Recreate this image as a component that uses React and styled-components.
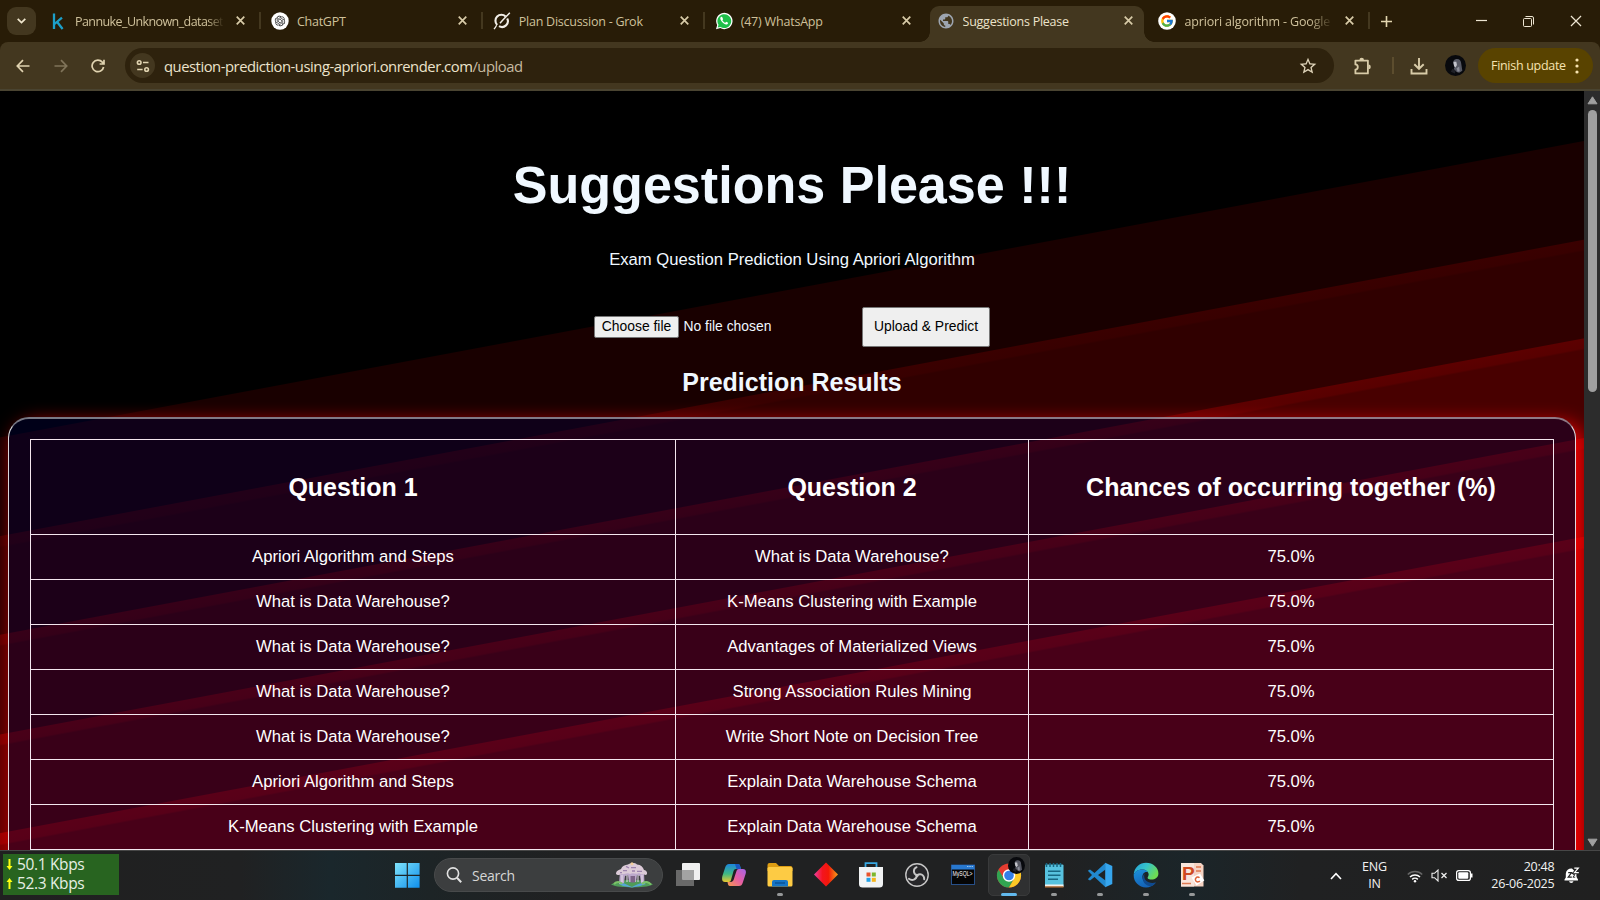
import React from "react";
import styled, { createGlobalStyle, css } from "styled-components";
import { FcGoogle } from "react-icons/fc";
import { RiOpenaiFill } from "react-icons/ri";
import { MdPublic, MdStarBorder } from "react-icons/md";

const UI = `"Open Sans", "Noto Sans", sans-serif`;
const ARIAL = `"Liberation Sans", Arial, sans-serif`;

const Global = createGlobalStyle`
  * { box-sizing: border-box; }
  html, body { margin: 0; padding: 0; background: #000; overflow: hidden; }
  svg { display: block; flex: none; }
`;

const Screen = styled.div`
  width: 1600px;
  height: 900px;
  display: flex;
  flex-direction: column;
  overflow: hidden;
  font-family: ${UI};
`;

/* ---------- tab strip ---------- */
const TabStrip = styled.div`
  height: 42px;
  flex: none;
  display: flex;
  background: #281c07;
  color: #d8cba8;
`;
const TabSearch = styled.div`
  width: 29px;
  height: 28px;
  margin: 7px 2px 0 7px;
  border-radius: 9px;
  background: #43371f;
  display: grid;
  place-items: center;
  flex: none;
`;
const TabBox = styled.div`
  position: relative;
  width: 221.9px;
  height: 42px;
  flex: none;
  display: flex;
  align-items: center;
  padding-left: 11px;
  ${(p) =>
    p.$active &&
    css`
      &::before {
        content: "";
        position: absolute;
        inset: 6px 3px 0 4px;
        border-radius: 9px 9px 0 0;
        background: #43371f;
      }
      &::after {
        content: "";
        position: absolute;
        left: -6px;
        right: -7px;
        bottom: 0;
        height: 10px;
        background:
          radial-gradient(circle at 0 0, transparent 9.5px, #43371f 10px) left / 10px 10px no-repeat,
          radial-gradient(circle at 100% 0, transparent 9.5px, #43371f 10px) right / 10px 10px no-repeat;
      }
    `}
`;
const TabIcon = styled.span`
  position: relative;
  z-index: 1;
  width: 18px;
  height: 18px;
  margin-right: 8px;
  display: grid;
  place-items: center;
`;
const TabTitle = styled.span`
  position: relative;
  z-index: 1;
  width: 149px;
  font-size: 12.5px;
  line-height: 20px;
  padding-top: 1px;
  letter-spacing: ${(p) => p.$ls || 0}px;
  white-space: nowrap;
  overflow: hidden;
  color: ${(p) => (p.$active ? "#ece3cb" : "#cfc19b")};
  ${(p) =>
    p.$fade &&
    css`
      mask-image: linear-gradient(to right, #000 ${p.$fade}px, transparent 149px);
    `}
`;
const TabClose = styled.span`
  position: relative;
  z-index: 1;
  margin-left: 12px;
  width: 10px;
  height: 10px;
`;
const TabDivider = styled.span`
  position: absolute;
  right: -1px;
  top: 12px;
  width: 2px;
  height: 17px;
  background: #44381f;
`;
const NewTab = styled.div`
  width: 34px;
  display: grid;
  place-items: center;
`;
const WindowButtons = styled.div`
  margin-left: auto;
  display: flex;
  align-items: center;
  gap: 36px;
  padding-right: 18px;
  color: #eee6d2;
`;

/* ---------- toolbar ---------- */
const ToolbarBack = styled.div`
  height: 49px;
  flex: none;
  background: #281c07;
`;
const Toolbar = styled.div`
  height: 49px;
  display: flex;
  align-items: center;
  padding: 0 7px 0 0;
  background: #43371f;
  border-bottom: 2px solid #4a4431;
  border-radius: 8px 8px 0 0;
  color: #d8cba8;
`;
const NavGroup = styled.div`
  width: 125px;
  display: flex;
  align-items: center;
  padding-left: 16px;
  gap: 23.5px;
`;
const AddressBar = styled.div`
  width: 1209px;
  height: 35px;
  border-radius: 18px;
  background: #2e220d;
  display: flex;
  align-items: center;
  padding: 0 16px 0 5px;
`;
const SiteInfo = styled.div`
  width: 25px;
  height: 25px;
  border-radius: 50%;
  background: #43371f;
  display: grid;
  place-items: center;
`;
const Url = styled.div`
  margin-left: 9px;
  flex: 1;
  font-size: 14.8px;
  letter-spacing: ${(p) => p.$ls}px;
  color: #ece3cb;
  white-space: nowrap;
  span { color: #c6baa0; }
`;
const ToolbarActions = styled.div`
  flex: 1;
  display: flex;
  align-items: center;
`;
const Slot = styled.div`
  width: ${(p) => p.$w}px;
  display: grid;
  place-items: center;
`;
const Rule = styled.div`
  width: 2px;
  height: 17px;
  background: #5c4d2e;
`;
const UpdatePill = styled.div`
  margin-left: auto;
  width: 115px;
  height: 35px;
  border-radius: 18px;
  background: #594300;
  color: #f7e3b0;
  font-size: 12.5px;
  letter-spacing: ${(p) => p.$ls}px;
  display: flex;
  align-items: center;
  justify-content: space-between;
  padding: 0 14px 0 13px;
  white-space: nowrap;
`;

/* ---------- page ---------- */
const Viewport = styled.div`
  height: 759px;
  flex: none;
  display: flex;
  overflow: hidden;
`;
const Page = styled.main`
  width: 1584px;
  height: 759px;
  overflow: hidden;
  display: flex;
  flex-direction: column;
  align-items: center;
  font-family: ${ARIAL};
  color: #fff;
  background: linear-gradient(
    169.4deg,
    #000 340px, #190000 341px,
    #190000 437px, #3a0000 438px, #380000 447px, #300000 449px,
    #300000 534px, #5c0000 535px, #580000 544px, #480000 546px,
    #480000 632px, #7a0000 633px, #760000 642px, #600000 644px,
    #600000 729px, #960000 730px, #920000 740px, #780000 742px
  );
`;
const Title = styled.h1`
  margin: 64px 0 0;
  font-size: 52.08px;
  line-height: 60px;
  font-weight: 700;
  color: #f0f8ff;
`;
const Subtitle = styled.p`
  margin: 35px 0 0;
  font-size: 16.67px;
  line-height: 20px;
  color: #f0f8ff;
`;
const UploadForm = styled.div`
  margin-top: 37px;
  width: 396px;
  height: 40px;
  display: flex;
  align-items: center;
  font-size: 13.89px;
`;
const Button = styled.button`
  font: inherit;
  color: #000;
  background: #efefef;
  border: 1px solid #767676;
  border-radius: 2px;
  padding: 0 0 2px;
  white-space: nowrap;
  width: ${(p) => p.$w}px;
  height: ${(p) => p.$h}px;
`;
const FileName = styled.span`
  margin-left: 4.5px;
  margin-bottom: 2px;
  flex: 1;
  color: #f0f8ff;
`;
const ResultsHeading = styled.h2`
  margin: 20px 0 0;
  font-size: 25px;
  line-height: 30px;
  font-weight: 700;
  color: #f0f8ff;
`;
const Card = styled.section`
  margin-top: 20px;
  width: 1568px;
  height: 460px;
  flex: none;
  padding: 20px 21px 0;
  border: 1px solid rgba(255, 255, 255, 0.85);
  border-top: 2px solid rgba(255, 255, 255, 0.48);
  border-bottom: 0;
  border-radius: 21px 21px 0 0;
  background: rgba(0, 0, 60, 0.4);
  box-shadow: 7px 7px 20px #f00;
`;
const Table = styled.table`
  width: 1524px;
  table-layout: fixed;
  border-collapse: collapse;
  th, td {
    border: 1px solid #f3e6ee;
    padding: 0;
    text-align: center;
    font-size: 16.67px;
    height: 45px;
  }
  th { height: 95px; font-size: 25px; font-weight: 700; }
`;
const ScrollTrack = styled.div`
  width: 16px;
  height: 759px;
  background: #2c2c2c;
  display: flex;
  flex-direction: column;
  align-items: center;
  padding: 5px 0 3px;
`;
const ScrollThumb = styled.div`
  width: 9px;
  height: 282px;
  margin: 5px 0 auto;
  border-radius: 5px;
  background: #9f9f9f;
`;

/* ---------- taskbar ---------- */
const Taskbar = styled.footer`
  height: 50px;
  flex: none;
  display: flex;
  align-items: stretch;
  border-top: 1px solid #474747;
  color: #fff;
  background: linear-gradient(90deg, #202020 0, #202122 240px, #1a272c 330px, #1d2426 430px, #202122 560px, #202122 1060px, #1b2529 1190px, #202122 1300px, #202020 1600px);
`;
const SpeedMeter = styled.div`
  margin: 3px 0 0 3px;
  width: 116px;
  height: 41px;
  background: #286420;
  display: flex;
  flex-direction: column;
  justify-content: center;
  padding: 0 0 2px 3px;
`;
const SpeedRow = styled.div`
  display: flex;
  align-items: center;
  gap: 4px;
  height: 19px;
  font-size: 15.5px;
  letter-spacing: ${(p) => p.$ls}px;
  color: #e6efe4;
  white-space: nowrap;
`;
const Dock = styled.div`
  margin-left: 268px;
  display: flex;
  align-items: center;
`;
const StartLogo = styled.div`
  width: 46px;
  padding-left: 8px;
`;
const SearchPill = styled.div`
  margin: 0 2.5px 1px 1px;
  width: 229px;
  height: 34px;
  border-radius: 17px;
  border: 1px solid #484a4b;
  background: #3c3e3f;
  display: flex;
  align-items: center;
  padding: 0 8px 0 11px;
  font-size: 14px;
  letter-spacing: ${(p) => p.$ls}px;
  color: #d6d6d6;
  span { flex: 1; margin-left: 10px; }
`;
const DockItem = styled.div`
  width: 45.75px;
  height: 49px;
  position: relative;
  display: grid;
  place-items: center;
  padding-bottom: 1px;
  ${(p) =>
    p.$active &&
    css`
      &::before {
        content: "";
        position: absolute;
        inset: 3px 2px 4px 2px;
        border-radius: 5px;
        background: #2f3031;
        border: 1px solid #393a3b;
      }
    `}
  svg { position: relative; }
  &::after {
    content: "";
    position: absolute;
    bottom: 4.5px;
    left: 50%;
    transform: translateX(-50%);
    height: 3px;
    border-radius: 2px;
    width: ${(p) => (p.$active ? 16 : p.$open ? 6 : 0)}px;
    background: ${(p) => (p.$active ? "#62b9ee" : "#969899")};
  }
`;
const Tray = styled.div`
  margin-left: auto;
  display: flex;
  align-items: center;
  padding-right: 11.5px;
  font-size: 12.5px;
`;
const TrayText = styled.div`
  line-height: 16.5px;
  width: ${(p) => p.$w}px;
  text-align: ${(p) => p.$align || "center"};
  letter-spacing: ${(p) => p.$ls || 0}px;
  white-space: nowrap;
  color: #f2f2f2;
`;

/* ---------- icons ---------- */
const Cross = ({ size = 9, w = 1.9 }) => (
  <svg width={size} height={size} viewBox="0 0 10 10" stroke="currentColor" strokeWidth={w}>
    <path d="M0.8 0.8L9.2 9.2M9.2 0.8L0.8 9.2" />
  </svg>
);
const Kaggle = () => (
  <svg width="12" height="17" viewBox="0 0 12 17" fill="none" stroke="#1c9fc9" strokeWidth="2.3">
    <path d="M2 0.5V16M2.5 11L10 4.6M5 8.8L10.6 16" />
  </svg>
);
const ChatGpt = () => (
  <svg width="18" height="18" viewBox="0 0 18 18">
    <circle cx="9" cy="9" r="8.7" fill="#fff" />
    <g transform="translate(2.7 2.7)" color="#222"><RiOpenaiFill size={12.6} /></g>
  </svg>
);
const Grok = () => (
  <svg width="18" height="18" viewBox="0 0 18 18" fill="none" stroke="#f2efe8">
    <path d="M4.2 12.9A5.9 5.9 0 0 1 12.6 4.4" strokeWidth="2.1" />
    <path d="M14.2 6.4A5.9 5.9 0 0 1 6 14.2" strokeWidth="2.1" />
    <path d="M16.8 0.8C14.6 3.2 9 8.8 7 11.2" strokeWidth="1.5" />
    <path d="M1 17.2C2 16 2.9 14.6 3.6 13.2" strokeWidth="1.3" />
  </svg>
);
const WhatsApp = () => (
  <svg width="18" height="18" viewBox="0 0 18 18">
    <path d="M1 17.2L2.2 13A8.2 8.2 0 1 1 5.3 16.1Z" fill="#fff" />
    <path d="M2.7 15.6L3.5 12.8A6.9 6.9 0 1 1 5.6 14.9Z" fill="#1fbf4a" />
    <path d="M6.2 4.8c-1.4.7-1.1 2.6.3 4.4 1.5 2.1 3.6 3.5 5.2 3.2 1-.2 1.5-1 1.4-1.7l-1.8-.9-1 1c-1.3-.5-2.3-1.4-2.9-2.6l.7-1-.9-2.3z" fill="#fff" />
  </svg>
);
const GoogleTab = () => (
  <svg width="18" height="18" viewBox="0 0 18 18">
    <circle cx="9" cy="9" r="8.8" fill="#fff" />
    <g transform="translate(2 2)"><FcGoogle size={14} /></g>
  </svg>
);
const Arrow = ({ flip, dim }) => (
  <svg width="14" height="14" viewBox="0 0 14 14" fill="none" stroke={dim ? "#80745a" : "#e0d3b0"} strokeWidth="1.7" transform={flip ? "scale(-1 1)" : undefined}>
    <path d="M13.5 7H1.5M7 1.2L1.3 7L7 12.8" />
  </svg>
);
const Reload = () => (
  <svg width="14" height="14" viewBox="0 0 14 14" fill="none" stroke="#e0d3b0" strokeWidth="1.7">
    <path d="M12.6 8A5.8 5.8 0 1 1 11.3 3.1L12.8 4.6M13 0.8V5H8.6" />
  </svg>
);
const Tune = () => (
  <svg width="14" height="14" viewBox="0 0 14 14" fill="none" stroke="#e0d3b0" strokeWidth="1.6">
    <circle cx="3.2" cy="3.5" r="1.8" /><path d="M7 3.5H12.5M1.2 10.5H6.6" /><circle cx="10.6" cy="10.5" r="1.8" />
  </svg>
);
const Extension = () => (
  <svg width="18" height="18" viewBox="0 0 18 18" fill="none" stroke="currentColor" strokeWidth="1.8" strokeLinejoin="round">
    <path d="M1.4 3.6H13.9V16.4H1.4V12.6C4.6 12.4 4.6 7.6 1.4 7.4Z" />
    <path d="M5.4 3.2A2.3 2.4 0 0 1 10 3.2ZM14.4 7.6A2.4 2.3 0 0 1 14.4 12.2Z" fill="currentColor" stroke="none" />
  </svg>
);
const Download = () => (
  <svg width="18" height="18" viewBox="0 0 18 18" fill="none" stroke="currentColor" strokeWidth="1.9">
    <path d="M9 1V11.5M4.3 7.2L9 11.8L13.7 7.2M1.5 12V16.5H16.5V12" />
  </svg>
);
const Avatar = ({ size = 21 }) => (
  <svg width={size} height={size} viewBox="0 0 20 20">
    <circle cx="10" cy="10" r="10" fill="#08090d" />
    <path d="M10 4C13 3 15.5 5 15.5 8.5L16.5 15L13.5 17C11 16 9 15 8.4 13L9.5 10.5L8 8.5C7.6 6 8.4 4.5 10 4Z" fill="#565863" />
    <path d="M8 6.5L10.8 6.4L11.4 9.6L10 12L8.6 10.6Z" fill="#c3c4cb" />
    <path d="M11 12.5L13.5 11L14 15.5L12 16Z" fill="#8b8d98" />
    <path d="M7 13L10 14.5L9.5 17.5L5.5 16Z" fill="#1f2027" />
  </svg>
);
const Triangle = ({ down }) => (
  <svg width="11" height="9" viewBox="0 0 11 9">
    <path d={down ? "M1 1.2H10L5.5 8.2Z" : "M1 7.8H10L5.5 0.8Z"} fill="#a0a0a0" stroke="#a0a0a0" strokeLinejoin="round" />
  </svg>
);
const SpeedArrow = ({ up }) => (
  <svg width="7" height="11" viewBox="0 0 7 11" fill="#ffff10" transform={up ? "rotate(180)" : undefined}>
    <path d="M2.5 0H4.5V7H6.5L3.5 11L0.5 7H2.5Z" />
  </svg>
);
const Windows = () => (
  <svg width="25" height="25" viewBox="0 0 25 25">
    <defs><linearGradient id="win" x1="0" y1="0" x2="1" y2="1"><stop offset="0" stopColor="#7fe3fb" /><stop offset="1" stopColor="#0f8fec" /></linearGradient></defs>
    <path d="M0 0H11.7V11.8H0ZM12.9 0H24.6V11.8H12.9ZM0 13H11.7V24.8H0ZM12.9 13H24.6V24.8H12.9Z" fill="url(#win)" />
  </svg>
);
const SearchGlass = () => (
  <svg width="16" height="16" viewBox="0 0 16 16" fill="none" stroke="#e2e2e2" strokeWidth="1.6">
    <circle cx="7" cy="6.5" r="5.6" /><path d="M11 10.8L15.2 15.2" strokeWidth="2" />
  </svg>
);
const Gazebo = () => (
  <svg width="44" height="26" viewBox="0 0 44 26">
    <path d="M1 22.5C8 19 12 18 22 18C32 18 38 20 43 22.5C38 25 31 25 22 25.5C13 25 6 25 1 22.5Z" fill="#4f9c58" />
    <path d="M9 22C13 19 18 24 22 25C26 23 32 19 36 22L30 24L22 25.6L13 24Z" fill="#55a6d6" />
    <path d="M10 10H34L34.5 22L31 21L30 14L27 13L26 20H19L18 13L15 14L14 21L9 22Z" fill="#bda9cc" />
    <path d="M6 12C6 9 8.5 8 11 7C12 4 15 3 18 2.6C20 0.6 25 0.4 27 2.4C31 2.8 33 5 34 8C37 8.6 38.2 11.6 36 13C33 12 31 13 29 11C26 13 23 10 20 12C17 10 14 13 12 12C9.5 12.6 7.6 14 6 12Z" fill="#dccbd8" />
    <path d="M13 8.6H17M21 5.6H26M27 9.4H32M16 4.4L19 6M22 9H25M10 10.6H12" stroke="#9d83ae" strokeWidth="1.3" />
    <path d="M20.5 14H25V20.5H20.5Z" fill="#7d6488" />
    <path d="M12 13V20M32 13V20M17 13V20M28 13V20" stroke="#e9dfec" strokeWidth="1" />
    <path d="M4 22C7 19 11 20 12 22M32 22C35 18.6 39 20 41 22.6" stroke="#7bc267" strokeWidth="2" fill="none" />
    <circle cx="22" cy="1.8" r="1.5" fill="#f2cf9c" />
  </svg>
);
const TaskView = () => (
  <svg width="26" height="26" viewBox="0 0 26 26">
    <rect x="7" y="1" width="18" height="17" rx="1" fill="#f0f0f0" />
    <path d="M1 8H19V24H1Z" fill="#858585" fillOpacity=".72" />
  </svg>
);
const Copilot = () => (
  <svg width="26" height="26" viewBox="0 0 26 26">
    <defs>
      <linearGradient id="cpA" x1="0" y1="0" x2="0" y2="1"><stop offset="0" stopColor="#1c86dc" /><stop offset=".55" stopColor="#3fb883" /><stop offset="1" stopColor="#e9c72f" /></linearGradient>
      <linearGradient id="cpB" x1="1" y1="0" x2="0" y2="1"><stop offset="0" stopColor="#a464e8" /><stop offset=".5" stopColor="#e65da5" /><stop offset="1" stopColor="#f59a4c" /></linearGradient>
    </defs>
    <path d="M8 2H17C19 2 19 4 20 7H15C13 7 12.5 9 12 11L10 18C9.5 20 8.5 20 6 20H4C1 20 0.7 17 1.4 14L4 6C5 3 6 2 8 2Z" fill="url(#cpA)" />
    <path d="M18 24H9C7 24 7 22 6.5 20H9C12 20 12.8 18 13.5 15L15.5 9C16.2 7 17.5 7 19 7H22C25 7 25.4 10 24.6 12L22 20C21 23 20 24 18 24Z" fill="url(#cpB)" />
    <path d="M14 2H17C19 2 19 4 20 7H15.5Z" fill="#1957c2" />
  </svg>
);
const Folder = () => (
  <svg width="26" height="26" viewBox="0 0 26 26">
    <path d="M0.5 3Q0.5 1 2.5 1H9L12 4H23.5Q25.5 4 25.5 6V9H0.5Z" fill="#dd9d13" />
    <rect x=".5" y="5" width="25" height="19.5" rx="1.5" fill="#fdcb44" />
    <path d="M5 24.5V20Q5 18 7 18H19Q21 18 21 20V24.5Z" fill="#1675c6" />
    <path d="M8 21H18" stroke="#0c5598" strokeWidth="1.6" />
  </svg>
);
const Diamond = () => (
  <svg width="26" height="26" viewBox="0 0 26 26">
    <defs><linearGradient id="dia"><stop offset="0" stopColor="#ef3fa0" /><stop offset=".35" stopColor="#f31420" /><stop offset=".6" stopColor="#f31808" /><stop offset="1" stopColor="#f6a01c" /></linearGradient></defs>
    <path d="M13 0.5L25 12.5L13 24.5L1 12.5Z" fill="url(#dia)" />
  </svg>
);
const Store = () => (
  <svg width="26" height="26" viewBox="0 0 26 26">
    <path d="M7.5 6V1.2H18.5V6" fill="none" stroke="#38a8e2" strokeWidth="1.8" />
    <path d="M1 5H25V22Q25 25.5 21.5 25.5H4.5Q1 25.5 1 22Z" fill="#f1f3f4" />
    <path d="M8.5 10.5H12.5V14.5H8.5Z" fill="#e9532b" /><path d="M13.8 10.5H17.8V14.5H13.8Z" fill="#7db72c" />
    <path d="M8.5 15.8H12.5V19.8H8.5Z" fill="#21a0e6" /><path d="M13.8 15.8H17.8V19.8H13.8Z" fill="#f6b51b" />
  </svg>
);
const Obs = () => (
  <svg width="26" height="26" viewBox="0 0 26 26" fill="none" stroke="#c6c6c6">
    <circle cx="13" cy="13" r="11.2" fill="#27272a" strokeWidth="1.4" />
    <g strokeWidth="1.9" strokeLinecap="round">
      <path d="M13 13.4C8.8 11.6 9 7 12.6 5.2" />
      <path d="M13 13.4C16.6 10.6 20.4 13.2 20.2 17.2" />
      <path d="M13 13.4C12.4 17.9 8 19.2 4.9 16.8" />
    </g>
    <circle cx="13" cy="13.4" r="1.6" fill="#c6c6c6" stroke="none" />
  </svg>
);
const MySqlText = styled.text`
  font: 400 7px "Liberation Sans", sans-serif;
`;
const MySql = () => (
  <svg width="26" height="26" viewBox="0 0 26 26">
    <rect x="1.5" y="3" width="23" height="19.5" fill="#050505" stroke="#274f88" />
    <rect x="1.5" y="3" width="23" height="4.5" fill="#2878cf" />
    <path d="M17 4.5H23" stroke="#9cc4ea" strokeDasharray="1.5 .8" />
    <MySqlText x="2.5" y="14" textLength="20" lengthAdjust="spacingAndGlyphs" fill="#fff">MySQL&gt;</MySqlText>
  </svg>
);
const Chrome = () => (
  <svg width="26" height="26" viewBox="0 0 26 26">
    <circle cx="13" cy="13.5" r="12" fill="#e53c30" />
    <path d="M2.6 7.5A12 12 0 0 0 13 25.5L18.2 16.5H7.8Z" fill="#31a451" />
    <path d="M13 25.5A12 12 0 0 0 23.4 7.5H13L18.2 16.5Z" fill="#fbc926" />
    <circle cx="13" cy="13.5" r="6.2" fill="#fff" /><circle cx="13" cy="13.5" r="4.8" fill="#347fe8" />
  </svg>
);
const ChromeBadge = styled.span`
  position: absolute;
  left: 22px;
  top: 6px;
  z-index: 1;
`;
const ChromeIcon = () => (<><Chrome /><ChromeBadge><Avatar size={17} /></ChromeBadge></>);
const Notepad = () => (
  <svg width="26" height="26" viewBox="0 0 26 26">
    <rect x="4" y="2.5" width="18.5" height="22" rx="1" fill="#57c2df" />
    <path d="M4 22.5H22.5V25H4Z" fill="#f2f2ef" /><path d="M4 24.2H22.5V25.6H4Z" fill="#ad6a35" />
    <path d="M5.5 1V5M9 1V5M12.5 1V5M16 1V5M19.5 1V5" stroke="#176783" strokeWidth="1.5" />
    <path d="M7 9.3H19.5M7 13.3H19.5M7 17.3H17" stroke="#176783" strokeWidth="1.5" />
  </svg>
);
const VsCode = () => (
  <svg width="26" height="26" viewBox="0 0 26 26">
    <path d="M18.5 0.8L7.5 11L3 7.6L0.8 8.8L5 13L0.8 17.2L3 18.4L7.5 15L18.5 25.2V18.6L11 13L18.5 7.4Z" fill="#2189cf" />
    <path d="M18.2 0.8L25.3 4V22L18.2 25.3Z" fill="#36a6ee" />
  </svg>
);
const Edge = () => (
  <svg width="26" height="26" viewBox="0 0 26 26">
    <defs>
      <linearGradient id="edA" x1="0" y1="0" x2="1" y2="0.5"><stop offset="0" stopColor="#239ddd" /><stop offset=".5" stopColor="#36c4c9" /><stop offset="1" stopColor="#6ddb53" /></linearGradient>
      <linearGradient id="edB" x1="0" y1="0" x2="0.3" y2="1"><stop offset="0" stopColor="#1c92dc" /><stop offset="1" stopColor="#1464b8" /></linearGradient>
    </defs>
    <path d="M0.7 13C1 5 7 0.7 13 0.7C20 0.7 25.5 5.5 25.4 11.5C25.3 15.5 22 17.5 18.5 17.5C15 17.5 14 16.2 15 14.8C17 12 14.5 8 10 7.6C5.5 7.3 2 9.5 0.7 13Z" fill="url(#edA)" />
    <path d="M0.7 13C2 9 6 7.2 10 7.6C12.5 7.8 14 9 14.8 10.2C11 9.5 9 12.5 9.5 16C10 20.5 15 23.5 22.5 21C20 24 16.5 25.4 13 25.4C6 25.4 0.5 20 0.7 13Z" fill="url(#edB)" />
    <path d="M11.5 11.5C8 14.5 9.5 24 18 24.3C20 23.5 21.8 22.2 23 20.3C17 22.5 9.5 19 11.5 11.5Z" fill="#0f4a8f" />
  </svg>
);
const PptText = styled.text`
  font: 700 19px "Liberation Sans", sans-serif;
`;
const PowerPoint = () => (
  <svg width="26" height="26" viewBox="0 0 26 26">
    <path d="M2 1H22L24.5 3.5V24.5H2Z" fill="#f5d3c3" />
    <path d="M2 1H15V24.5H2Z" fill="#f8e5db" />
    <path d="M17 5H22M17 9H22M3 21.5H12" stroke="#dd7a52" strokeWidth="1.5" />
    <PptText x="3" y="18" fill="#cf4a20">P</PptText>
    <path d="M12.5 15.5L21 11.5L25.3 18.5L17.5 23.5Z" fill="#fff" />
    <path d="M20.5 15.8A2.4 2.4 0 1 0 20.8 18.8" fill="none" stroke="#dd6338" strokeWidth="1.5" />
  </svg>
);
const Caret = () => (
  <svg width="12" height="8" viewBox="0 0 12 8" fill="none" stroke="#fff" strokeWidth="1.6"><path d="M1 7L6 1.7L11 7" /></svg>
);
const Wifi = () => (
  <svg width="16" height="14" viewBox="0 0 16 14" fill="none" stroke="#fff" strokeWidth="1.5">
    <path d="M0.8 5.5A10 10 0 0 1 15.2 5.5" stroke="#666" />
    <path d="M3 8A7 7 0 0 1 13 8M5.2 10.4A4 4 0 0 1 10.8 10.4" />
    <circle cx="8" cy="12.2" r="1.2" fill="#fff" stroke="none" />
  </svg>
);
const Mute = () => (
  <svg width="17" height="13" viewBox="0 0 17 13" fill="none" stroke="#eee" strokeWidth="1.1">
    <path d="M1 4.3H3.5L7 1V12L3.5 8.7H1Z" /><path d="M10.5 4L15.5 9M15.5 4L10.5 9" strokeWidth="1.3" />
  </svg>
);
const Battery = () => (
  <svg width="17" height="11" viewBox="0 0 17 11">
    <rect x=".6" y=".6" width="13.8" height="9.8" rx="2.2" fill="none" stroke="#fff" strokeWidth="1.2" />
    <rect x="2.3" y="2.3" width="10" height="6.4" rx="1" fill="#fff" /><path d="M15.7 3.5V7.5" stroke="#fff" strokeWidth="1.6" />
  </svg>
);
const Bell = () => (
  <svg width="16" height="17" viewBox="0 0 16 17">
    <path d="M0.5 13.4V12.4L1.8 10.4V6.8A5.4 5.4 0 0 1 8 1.6L12.4 6V9L12.8 10.4L14 12.4V13.4Z" fill="#fff" />
    <path d="M5 14.2H9.5A2.3 2.3 0 0 1 5 14.2Z" fill="#fff" />
    <path d="M4.2 5.6H7.6L4.2 10.2H7.8" stroke="#222" fill="none" strokeWidth="1.2" />
    <path d="M9.6 1H14.4L10.2 5.6H15" stroke="#222" fill="none" strokeWidth="2.6" />
    <path d="M10.3 1.2H14.3L10.5 5.6H14.8" stroke="#fff" fill="none" strokeWidth="1.2" />
    <path d="M8.8 7.6H11L8.9 10.2H11.2" stroke="#222" fill="none" strokeWidth=".9" />
  </svg>
);

/* ---------- data ---------- */
const tabs = [
  { title: "Pannuke_Unknown_dataset", icon: <Kaggle />, fade: 132, ls: -0.58 },
  { title: "ChatGPT", icon: <ChatGpt />, ls: -0.25 },
  { title: "Plan Discussion - Grok", icon: <Grok />, ls: -0.25 },
  { title: "(47) WhatsApp", icon: <WhatsApp />, ls: -0.2, noDivider: true },
  { title: "Suggestions Please", icon: <MdPublic size={18} color="#9da5b0" />, active: true, ls: -0.25 },
  { title: "apriori algorithm - Google", icon: <GoogleTab />, fade: 125, ls: -0.16 },
];
const WD = "What is Data Warehouse?";
const rows = [
  ["Apriori Algorithm and Steps", WD],
  [WD, "K-Means Clustering with Example"],
  [WD, "Advantages of Materialized Views"],
  [WD, "Strong Association Rules Mining"],
  [WD, "Write Short Note on Decision Tree"],
  ["Apriori Algorithm and Steps", "Explain Data Warehouse Schema"],
  ["K-Means Clustering with Example", "Explain Data Warehouse Schema"],
];
const apps = [
  { icon: <TaskView /> }, { icon: <Copilot /> }, { icon: <Folder />, open: true }, { icon: <Diamond /> },
  { icon: <Store /> }, { icon: <Obs /> }, { icon: <MySql /> }, { icon: <ChromeIcon />, active: true },
  { icon: <Notepad />, open: true }, { icon: <VsCode />, open: true }, { icon: <Edge />, open: true },
  { icon: <PowerPoint />, open: true },
];

export default function App() {
  return (
    <Screen>
      <Global />
      <TabStrip>
        <TabSearch>
          <svg width="9" height="6" viewBox="0 0 9 6" fill="none" stroke="#efe6cd" strokeWidth="1.7"><path d="M0.7 0.8L4.5 4.6L8.3 0.8" /></svg>
        </TabSearch>
        {tabs.map((t) => (
          <TabBox key={t.title} $active={t.active}>
            <TabIcon>{t.icon}</TabIcon>
            <TabTitle $active={t.active} $fade={t.fade} $ls={t.ls}>{t.title}</TabTitle>
            <TabClose><Cross /></TabClose>
            {!t.active && !t.noDivider && <TabDivider />}
          </TabBox>
        ))}
        <NewTab>
          <svg width="11" height="11" viewBox="0 0 11 11" stroke="#e3d6b0" strokeWidth="1.6"><path d="M5.5 0V11M0 5.5H11" /></svg>
        </NewTab>
        <WindowButtons>
          <svg width="11" height="11" viewBox="0 0 11 11" stroke="currentColor"><path d="M0 4.5H11" strokeWidth="1.2" /></svg>
          <svg width="11" height="11" viewBox="0 0 11 11" fill="none" stroke="currentColor"><rect x=".5" y="2.5" width="8" height="8" rx="1" /><path d="M2.5 0.5H9Q10.5 0.5 10.5 2V8.5" /></svg>
          <Cross size={12} w={1} />
        </WindowButtons>
      </TabStrip>
      <ToolbarBack>
        <Toolbar>
          <NavGroup><Arrow /><Arrow flip dim /><Reload /></NavGroup>
          <AddressBar>
            <SiteInfo><Tune /></SiteInfo>
            <Url $ls={-0.47}>question-prediction-using-apriori.onrender.com<span>/upload</span></Url>
            <MdStarBorder size={20} color="#ddd2b8" />
          </AddressBar>
          <ToolbarActions>
            <Slot $w={58}><Extension /></Slot>
            <Rule />
            <Slot $w={50}><Download /></Slot>
            <Slot $w={22}><Avatar /></Slot>
            <UpdatePill $ls={-0.3}>
              Finish update
              <svg width="4" height="16" viewBox="0 0 4 16" fill="#f7e3b0"><circle cx="2" cy="2" r="1.6" /><circle cx="2" cy="8" r="1.6" /><circle cx="2" cy="14" r="1.6" /></svg>
            </UpdatePill>
          </ToolbarActions>
        </Toolbar>
      </ToolbarBack>
      <Viewport>
        <Page>
          <Title>Suggestions Please !!!</Title>
          <Subtitle>Exam Question Prediction Using Apriori Algorithm</Subtitle>
          <UploadForm>
            <Button $w={85} $h={22}>Choose file</Button>
            <FileName>No file chosen</FileName>
            <Button $w={128} $h={40}>Upload &amp; Predict</Button>
          </UploadForm>
          <ResultsHeading>Prediction Results</ResultsHeading>
          <Card>
            <Table>
              <colgroup><col width="645" /><col width="353" /><col width="525" /></colgroup>
              <thead>
                <tr><th>Question 1</th><th>Question 2</th><th>Chances of occurring together (%)</th></tr>
              </thead>
              <tbody>
                {rows.map(([a, b], i) => (
                  <tr key={i}><td>{a}</td><td>{b}</td><td>75.0%</td></tr>
                ))}
              </tbody>
            </Table>
          </Card>
        </Page>
        <ScrollTrack><Triangle /><ScrollThumb /><Triangle down /></ScrollTrack>
      </Viewport>
      <Taskbar>
        <SpeedMeter>
          <SpeedRow $ls={-0.35}><SpeedArrow />50.1 Kbps</SpeedRow>
          <SpeedRow $ls={-0.35}><SpeedArrow up />52.3 Kbps</SpeedRow>
        </SpeedMeter>
        <Dock>
          <StartLogo><Windows /></StartLogo>
          <SearchPill $ls={-0.25}><SearchGlass /><span>Search</span><Gazebo /></SearchPill>
          {apps.map((a, i) => (
            <DockItem key={i} $open={a.open} $active={a.active}>{a.icon}</DockItem>
          ))}
        </Dock>
        <Tray>
          <Slot $w={26}><Caret /></Slot>
          <TrayText $w={52} $ls={-0.2}>ENG<br />IN</TrayText>
          <Slot $w={28}><Wifi /></Slot>
          <Slot $w={22}><Mute /></Slot>
          <Slot $w={28}><Battery /></Slot>
          <TrayText $w={76} $align="right" $ls={-0.2}>20:48<br />26-06-2025</TrayText>
          <Slot $w={34}><Bell /></Slot>
        </Tray>
      </Taskbar>
    </Screen>
  );
}
